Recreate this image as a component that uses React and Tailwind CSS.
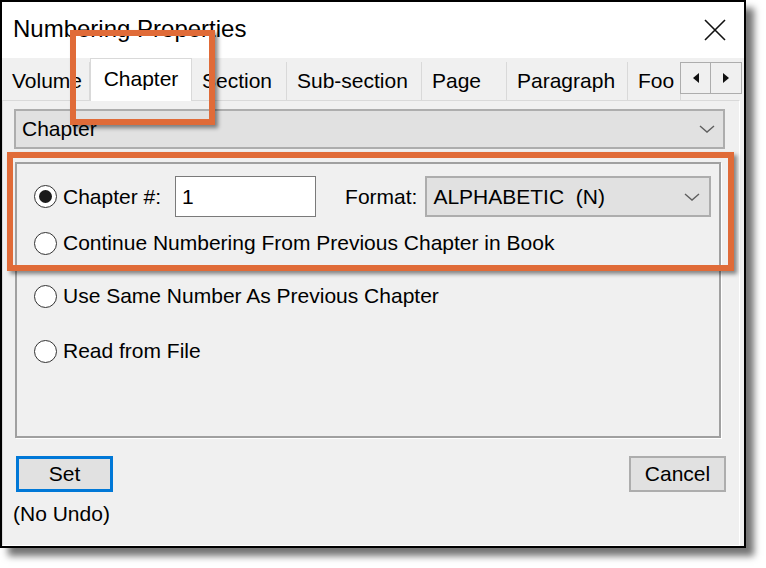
import React from 'react';

const font = { fontFamily: '"Liberation Sans", Arial, sans-serif' };

const Chevron = () => (
  <svg width="16" height="10" viewBox="0 0 16 10" className="shrink-0">
    <path d="M1 2 L8 8 L15 2" fill="none" stroke="#5f5f5f" strokeWidth="1.4" />
  </svg>
);

const Radio = ({ checked, label }) => (
  <div className="flex items-center gap-[6px]">
    <span className="w-[23px] h-[23px] rounded-full border-[1.5px] border-[#333] bg-white flex items-center justify-center">
      {checked && <span className="w-[13px] h-[13px] rounded-full bg-[#1a1a1a]" />}
    </span>
    <span>{label}</span>
  </div>
);

const tabs = [
  { name: 'Volume', w: 'w-[88px]' },
  { name: 'Chapter', w: 'w-[102px]', active: true },
  { name: 'Section', w: 'w-[95px]' },
  { name: 'Sub-section', w: 'w-[135px]' },
  { name: 'Page', w: 'w-[85px]' },
  { name: 'Paragraph', w: 'w-[121px]' },
  { name: 'Foo', w: 'w-[53px]' },
];

export default function App() {
  return (
    <div className="relative w-[766px] h-[568px] bg-white text-[21px] text-black overflow-hidden" style={font}>
      <div className="w-[746px] h-[548px] border-2 border-black flex flex-col shadow-[8px_8px_7px_rgba(0,0,0,0.55)]">
        {/* title bar */}
        <div className="h-[56px] bg-white flex items-center justify-between pl-[11px] pr-[18px] shrink-0">
          <span className="text-[24px] -mt-[2px]">Numbering Properties</span>
          <svg width="22" height="22" viewBox="0 0 22 22">
            <path d="M1 1 L21 21 M21 1 L1 21" stroke="#111" strokeWidth="1.6" />
          </svg>
        </div>

        <div className="flex-1 bg-[#f0f0f0] flex flex-col">
          {/* tabs */}
          <div className="h-[42px] flex items-end relative shrink-0">
            {tabs.map((t) =>
              t.active ? (
                <div key={t.name} className={`${t.w} h-[43px] -mb-px bg-white border border-b-0 border-[#d9d9d9] flex items-center justify-center z-10 pb-[3px]`}>
                  {t.name}
                </div>
              ) : (
                <div key={t.name} className={`${t.w} h-[38px] border-r border-[#d9d9d9] flex items-center pl-[10px] whitespace-nowrap`}>
                  {t.name}
                </div>
              )
            )}
            <div className="absolute right-[2px] top-[4px] flex">
              <div className="w-[31px] h-[32px] border border-[#adadad] bg-[#f0f0f0] flex items-center justify-center">
                <svg width="6" height="10" viewBox="0 0 6 10"><path d="M6 0 L0 5 L6 10 Z" fill="#111" /></svg>
              </div>
              <div className="w-[31px] h-[32px] border border-l-0 border-[#adadad] bg-[#f0f0f0] flex items-center justify-center">
                <svg width="6" height="10" viewBox="0 0 6 10"><path d="M0 0 L6 5 L0 10 Z" fill="#111" /></svg>
              </div>
            </div>
          </div>

          {/* tab page */}
          <div className="flex-1 mr-[4px] border border-[#d9d9d9] border-r-white border-b-white flex flex-col pl-[11px] pr-[13px] pt-[8px]">
            <div className="h-[40px] w-[711px] bg-[#e1e1e1] border-2 border-[#adadad] flex items-center justify-between pl-[6px] pr-[8px]">
              <span>Chapter</span>
              <Chevron />
            </div>

            <div className="mt-[13px] ml-[1px] w-[706px] h-[276px] border-2 border-[#a0a0a0] shadow-[1px_1px_0_#fff] flex flex-col pl-[17px] pt-[12px]">
              <div className="flex items-center h-[41px]">
                <Radio checked label="Chapter #:" />
                <div className="ml-[14px] w-[141px] h-[41px] bg-white border border-[#7a7a7a] flex items-center pl-[6px]">1</div>
                <span className="ml-[29px]">Format:</span>
                <div className="ml-[8px] w-[286px] h-[41px] bg-[#e1e1e1] border-2 border-[#adadad] flex items-center justify-between pl-[6px] pr-[9px]">
                  <span className="whitespace-pre">ALPHABETIC  (N)</span>
                  <Chevron />
                </div>
              </div>
              <div className="mt-[11px] h-[30px] flex items-center">
                <Radio label="Continue Numbering From Previous Chapter in Book" />
              </div>
              <div className="mt-[23px] h-[30px] flex items-center">
                <Radio label="Use Same Number As Previous Chapter" />
              </div>
              <div className="mt-[25px] h-[30px] flex items-center">
                <Radio label="Read from File" />
              </div>
            </div>

            <div className="mt-[18px] flex justify-between items-start">
              <div className="flex flex-col">
                <div className="ml-[2px] w-[97px] h-[36px] bg-[#e1e1e1] border-[3px] border-[#0078d7] flex items-center justify-center">Set</div>
                <span className="-ml-[1px] mt-[6px]">(No Undo)</span>
              </div>
              <div className="w-[97px] h-[36px] bg-[#e1e1e1] border-2 border-[#adadad] flex items-center justify-center">Cancel</div>
            </div>
          </div>
        </div>
      </div>

      {/* orange annotation frames */}
      <div className="absolute left-[70px] top-[30px] w-[145px] h-[95px] border-[6px] border-[#e06b38] shadow-[3px_3px_4px_rgba(0,0,0,0.45)]" />
      <div className="absolute left-[7px] top-[152px] w-[727px] h-[119px] border-[6px] border-[#e06b38] shadow-[3px_3px_4px_rgba(0,0,0,0.45)]" />
    </div>
  );
}
